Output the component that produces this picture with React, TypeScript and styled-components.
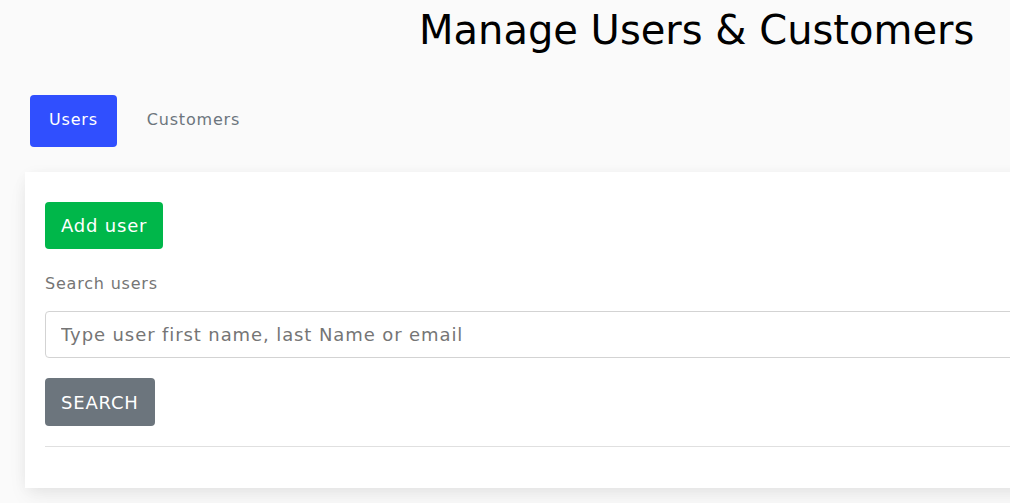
import React from 'react';
import styled, { createGlobalStyle } from 'styled-components';

const GlobalStyle = createGlobalStyle`
  html, body {
    margin: 0;
    padding: 0;
    background: #fafafa;
    overflow: hidden;
    font-family: 'DejaVu Sans', 'Noto Sans', sans-serif;
  }
`;

const Page = styled.main`
  width: 1010px;
  height: 503px;
`;

const Title = styled.h1`
  margin: 0;
  padding: 6px 0 0 419px;
  font-size: 40px;
  font-weight: 400;
  line-height: 48px;
  color: #000;
  white-space: nowrap;
`;

const TabBar = styled.nav`
  display: flex;
  align-items: center;
  gap: 30px;
  margin: 41px 0 0 30px;
`;

const Tab = styled.button<{ $active?: boolean }>`
  height: 52px;
  padding: 0 ${(p) => (p.$active ? '19px' : '0')} 3px;
  border: none;
  border-radius: 4px;
  font-family: inherit;
  font-size: 16px;
  letter-spacing: 0.8px;
  background: ${(p) => (p.$active ? '#304ffe' : 'transparent')};
  color: ${(p) => (p.$active ? '#fff' : '#6c757d')};
`;

const Card = styled.section`
  width: 1100px;
  margin: 25px 0 0 25px;
  padding: 30px 20px 41px;
  box-sizing: border-box;
  background: #fff;
  box-shadow: 0 2px 15px -3px rgba(0, 0, 0, 0.07), 0 10px 20px -2px rgba(0, 0, 0, 0.06);
`;

const Button = styled.button<{ $variant: 'success' | 'secondary' }>`
  display: block;
  height: ${(p) => (p.$variant === 'success' ? '47px' : '48px')};
  padding: 0 16px;
  border: none;
  border-radius: 4px;
  font-family: inherit;
  font-size: 18px;
  letter-spacing: 0.8px;
  color: #fff;
  background: ${(p) => (p.$variant === 'success' ? '#00b74a' : '#6c757d')};
  text-transform: ${(p) => (p.$variant === 'secondary' ? 'uppercase' : 'none')};
`;

const Label = styled.label`
  display: block;
  margin: 23px 0 15px;
  font-size: 16px;
  line-height: 24px;
  letter-spacing: 0.8px;
  color: #757575;
`;

const SearchInput = styled.input`
  display: block;
  width: 100%;
  height: 47px;
  box-sizing: border-box;
  padding: 0 15px;
  border: 1px solid #d3d3d3;
  border-radius: 4px;
  font-family: inherit;
  font-size: 18px;
  letter-spacing: 0.9px;
  &::placeholder {
    color: #757575;
  }
`;

const Actions = styled.div`
  margin-top: 20px;
`;

const Divider = styled.hr`
  margin: 20px 0 0;
  border: none;
  border-top: 1px solid #e0e0e0;
`;

export default function App() {
  return (
    <Page>
      <GlobalStyle />
      <Title>Manage Users &amp; Customers</Title>
      <TabBar>
        <Tab $active>Users</Tab>
        <Tab>Customers</Tab>
      </TabBar>
      <Card>
        <Button $variant="success">Add user</Button>
        <Label htmlFor="search">Search users</Label>
        <SearchInput id="search" placeholder="Type user first name, last Name or email" />
        <Actions>
          <Button $variant="secondary">Search</Button>
        </Actions>
        <Divider />
      </Card>
    </Page>
  );
}
